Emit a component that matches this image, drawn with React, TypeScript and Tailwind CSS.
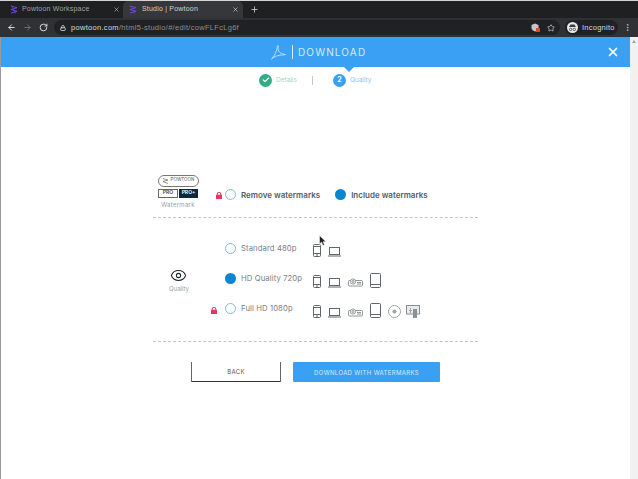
import React from "react";
import { X, Plus, ArrowLeft, ArrowRight, RotateCw, Lock, Star, EllipsisVertical, Check, Eye } from "lucide-react";

const PowLogo = () => (
  <svg width="8" height="9" viewBox="0 0 9 10" fill="none" strokeWidth="1">
    <path d="M1 1 L8 3 L1 5 L8 7 L1 9" stroke="#8a3fe0" />
    <path d="M2 0.5 L6 9.5" stroke="#3f51d8" />
  </svg>
);

const Phone = () => (
  <svg width="8" height="13" viewBox="0 0 8 13" fill="none" stroke="#60666b" strokeWidth="1">
    <rect x="0.5" y="0.5" width="7" height="12" rx="1" />
    <path d="M0.5 2.5H7.5M0.5 9.5H7.5M4 9.5V12.5" />
  </svg>
);
const Laptop = () => (
  <svg width="13" height="10" viewBox="0 0 13 10" fill="none" stroke="#60666b" strokeWidth="1">
    <rect x="1.5" y="0.5" width="10" height="7" />
    <path d="M0 9H13" />
  </svg>
);
const Projector = () => (
  <svg width="15" height="9" viewBox="0 0 15 9" fill="none" stroke="#777d82" strokeWidth="0.8">
    <rect x="0.5" y="2.5" width="14" height="5.5" rx="1" />
    <circle cx="5" cy="3.5" r="2.6" fill="#fff" />
    <circle cx="5" cy="3.5" r="1" />
    <path d="M9 4.5H13M9 6H13" />
  </svg>
);
const Tablet = () => (
  <svg width="11" height="15" viewBox="0 0 11 15" fill="none" stroke="#60666b" strokeWidth="1">
    <rect x="0.5" y="0.5" width="10" height="14" rx="1" />
    <path d="M0.5 11.5H10.5" />
  </svg>
);
const Disc = () => (
  <svg width="13" height="13" viewBox="0 0 13 13" fill="none" stroke="#8a8f93" strokeWidth="0.8">
    <circle cx="6.5" cy="6.5" r="6" />
    <circle cx="6.5" cy="6.5" r="1.6" fill="#a5a8ab" />
  </svg>
);
const Screen = () => (
  <svg width="14" height="13" viewBox="0 0 14 13" fill="none" className="-ml-[2px]">
    <rect x="0.5" y="0.5" width="13" height="8.5" stroke="#8a8f93" strokeWidth="1" fill="#e8eaeb" />
    <rect x="7" y="4" width="4" height="9" fill="#8b9094" />
    <path d="M3 5.5H6M4.5 3V8" stroke="#a5a8ab" />
  </svg>
);

const RedLock = () => (
  <svg width="6" height="7" viewBox="0 0 6 7">
    <path d="M1.2 3V2a1.8 1.8 0 0 1 3.6 0v1" fill="none" stroke="#e8345f" strokeWidth="1" />
    <rect x="0" y="2.8" width="6" height="4.2" rx="0.5" fill="#e8345f" />
  </svg>
);

const Radio = ({ on }: { on?: boolean }) =>
  on ? (
    <span className="block h-[11px] w-[11px] rounded-full bg-[#0a86cf]" />
  ) : (
    <span className="block h-[11px] w-[11px] rounded-full border border-[#86bdd6] bg-white" />
  );

const QualityRow = ({ label, on, locked, children }: { label: string; on?: boolean; locked?: boolean; children: React.ReactNode }) => (
  <div className="flex h-[30px] items-center">
    <div className="flex w-[69px] justify-end pr-[5px] pt-[2px]">{locked && <RedLock />}</div>
    <div className="flex w-[16px] justify-center pb-[1px]"><Radio on={on} /></div>
    <span className="ml-[3px] w-[72px] text-[7.7px] tracking-[0.1px] text-[#7b8084]">{label}</span>
    <div className="flex items-end gap-[7px] pt-[2px]">{children}</div>
  </div>
);

export default function App() {
  return (
    <div className="flex h-[479px] w-[638px] flex-col overflow-hidden bg-white font-['Inter',sans-serif]">
      <div className="h-px bg-[#d5d5d5]" />
      <div className="flex h-[17px] items-end bg-[#1f2021] pl-[4px] text-[#bfc1c4]">
        <div className="flex h-[17px] w-[119px] items-center pl-[6px] pr-[3px]">
          <PowLogo />
          <span className="ml-[4px] flex-1 font-['Liberation_Sans',sans-serif] text-[7px] tracking-[0.2px] text-[#9fa2a5]">Powtoon Workspace</span>
          <X size={7} strokeWidth={2} className="text-[#c5c7ca]" />
        </div>
        <div className="flex h-[17px] w-[120px] items-center rounded-t-[5px] bg-[#35373a] pl-[6px] pr-[4px]">
          <PowLogo />
          <span className="ml-[5px] flex-1 font-['Liberation_Sans',sans-serif] text-[7px] tracking-[0.2px] text-[#cfd1d3]">Studio | Powtoon</span>
          <X size={7} strokeWidth={2} className="text-[#e0e1e3]" />
        </div>
        <Plus size={9} strokeWidth={2} className="mb-[4px] ml-[7px] text-[#dcdde0]" />
      </div>
      <div className="flex h-[19px] items-center bg-[#2f3134] pl-[7px] pr-[4px]">
        <ArrowLeft size={9} strokeWidth={2.5} className="text-[#e0e1e3]" />
        <ArrowRight size={9} strokeWidth={2.5} className="ml-[7px] text-[#6f7175]" />
        <RotateCw size={9} strokeWidth={2.5} className="ml-[7px] text-[#e0e1e3]" />
        <div className="ml-[6px] flex h-[15px] w-[506px] items-center rounded-full bg-[#202124] pl-[6px] font-['Liberation_Sans',sans-serif] text-[7.5px] tracking-[0.3px]">
          <Lock size={6} strokeWidth={3} className="text-[#e0e1e3]" />
          <span className="ml-[5px] text-[#d8d9db]">powtoon.com</span>
          <span className="text-[#8d8f93]">/html5-studio/#/edit/cowFLFcLg6f</span>
          <svg width="9" height="9" viewBox="0 0 9 9" className="ml-auto mr-[7px]">
            <path d="M4 0.5L7.5 2V5C7.5 7 5.5 8 4 8.5C2.5 8 0.5 7 0.5 5V2Z" fill="#c4c5c7" />
            <rect x="5" y="5" width="4" height="4" fill="#e0452f" />
          </svg>
          <Star size={8} strokeWidth={2} className="mr-[5px] text-[#d8d9db]" />
        </div>
        <div className="ml-[5px] flex h-[15px] w-[53px] items-center rounded-full bg-[#202124] pl-[2px] font-['Liberation_Sans',sans-serif]">
          <svg width="11" height="11" viewBox="0 0 11 11">
            <circle cx="5.5" cy="5.5" r="5.5" fill="#e9e9e9" />
            <path d="M2 5H9L7.5 2.5H3.5Z" fill="#3a3b3e" />
            <circle cx="3.7" cy="7.4" r="1.2" fill="none" stroke="#3a3b3e" strokeWidth="0.8" />
            <circle cx="7.3" cy="7.4" r="1.2" fill="none" stroke="#3a3b3e" strokeWidth="0.8" />
          </svg>
          <span className="ml-[4px] text-[7.5px] tracking-[0.25px] text-[#d8d9db]">Incognito</span>
        </div>
        <EllipsisVertical size={9} strokeWidth={2} className="ml-[5px] text-[#c5c7ca]" />
      </div>

      <div className="flex min-h-0 flex-1">
        <div className="w-px bg-[#9a9a9a]" />
        <main className="relative flex min-w-0 flex-1 flex-col">
          <header className="relative flex h-[30px] items-center bg-[#3aa0f3]">
            <div className="ml-[270px] flex items-center">
              <svg width="15" height="15" viewBox="0 0 15 15" fill="none" stroke="#d5ebfc" strokeWidth="0.8">
                <path d="M0.5 14C3 12 6 6 6.5 1C6.7 -0.5 8 1 7 4C7.5 7 10 9 14.5 9.5C12 10.5 6 9 0.5 14Z" />
              </svg>
              <span className="ml-[6px] h-[14px] w-px bg-[#d5ebfc]" />
              <span className="ml-[5px] text-[10px] tracking-[1.15px] text-[#d5ebfc]">DOWNLOAD</span>
            </div>
            <X size={14} strokeWidth={3} className="absolute right-[10px] text-white" />
            <span className="absolute left-[343px] top-[30px] h-0 w-0 border-x-[5px] border-t-[5px] border-x-transparent border-t-[#3aa0f3]" />
          </header>

          <div className="flex h-[26px] items-center">
            <span className="ml-[258px] flex h-[13px] w-[13px] items-center justify-center rounded-full bg-[#33ad85]">
              <Check size={8} strokeWidth={3.5} className="text-white" />
            </span>
            <span className="ml-[4px] pt-[2px] text-[6.5px] text-[#9fd6c3]">Details</span>
            <span className="ml-[15px] h-[9px] w-px bg-[#c9c9c9]" />
            <span className="ml-[20px] flex h-[13px] w-[13px] items-center justify-center rounded-full bg-[#3aa0f3] text-[7px] font-bold text-white">2</span>
            <span className="ml-[4px] pt-[2px] text-[6.5px] text-[#8cc8ee]">Quality</span>
          </div>

          <div className="ml-[152px] mt-[83px] w-[325px]">
            <div className="flex h-[37px] items-center">
              <div className="ml-[2px] flex w-[46px] flex-col items-center pb-[6px]">
                <div className="flex h-[12px] w-[41px] items-center justify-center gap-[2px] rounded-full border border-[#777] text-[4.5px] leading-none text-[#555]">
                  <svg width="7" height="6" viewBox="0 0 7 6" fill="none" stroke="#666" strokeWidth="0.7"><path d="M1 0.5L6 2L1 3.5L6 5.5" /></svg>
                  POWTOON
                </div>
                <div className="mt-[2px] flex gap-[1px]">
                  <span className="flex h-[9px] w-[20px] items-center justify-center border border-[#666] text-[5px] font-semibold text-[#444]">PRO</span>
                  <span className="flex h-[9px] w-[19px] items-center justify-center bg-[#10263b] text-[5px] font-semibold text-white">PRO+</span>
                </div>
                <span className="mt-[2px] text-[6px] tracking-[0.3px] text-[#9a9ea2]">Watermark</span>
              </div>
              <div className="ml-[15px] pt-[1px]"><RedLock /></div>
              <div className="ml-[3px]"><Radio /></div>
              <span className="ml-[5px] text-[8px] font-semibold text-[#565c61]">Remove watermarks</span>
              <div className="ml-[15px]"><Radio on /></div>
              <span className="ml-[5px] text-[8px] font-semibold text-[#565c61]">Include watermarks</span>
            </div>
            <div className="mt-[4px] border-t border-dashed border-[#c4c4c4]" />

            <div className="relative mt-[16px]">
              <QualityRow label="Standard 480p"><Phone /><Laptop /></QualityRow>
              <QualityRow label="HD Quality 720p" on><Phone /><Laptop /><span className="mb-[1px]"><Projector /></span><Tablet /></QualityRow>
              <QualityRow label="Full HD 1080p" locked><Phone /><Laptop /><span className="mb-[1px]"><Projector /></span><Tablet /><Disc /><Screen /></QualityRow>
              <div className="absolute left-[16px] top-[33px] flex flex-col items-center">
                <Eye size={17} strokeWidth={1.5} className="text-[#1f2a30]" />
                <span className="text-[6px] text-[#9a9ea2]">Quality</span>
              </div>
            </div>

            <div className="mt-[17px] border-t border-dashed border-[#c4c4c4]" />

            <div className="mt-[20px] flex">
              <button className="ml-[38px] flex h-[20px] w-[90px] items-center justify-center rounded-b-[1px] border-x border-b border-x-[#666] border-b-[#333] text-[6px] tracking-[0.3px] text-[#555]">BACK</button>
              <button className="ml-[12px] flex h-[20px] w-[147px] items-center justify-center rounded-[1px] bg-[#3aa0f3] text-[6px] tracking-[0.35px] text-[#d5ebfc]">DOWNLOAD WITH WATERMARKS</button>
            </div>
          </div>
          <svg width="8" height="11" viewBox="0 0 8 11" className="absolute left-[318px] top-[198px]">
            <path d="M0.5 0.5V9L2.5 7.2L4 10.5L5.5 9.8L4 6.8H7Z" fill="#222" stroke="#fff" strokeWidth="0.5" />
          </svg>
        </main>
        <div className="flex w-[8px] justify-center bg-[#f1f1f1] pt-[3px]">
          <span className="h-0 w-0 border-x-[2px] border-b-[3px] border-x-transparent border-b-[#a3a3a3]" />
        </div>
      </div>
    </div>
  );
}
